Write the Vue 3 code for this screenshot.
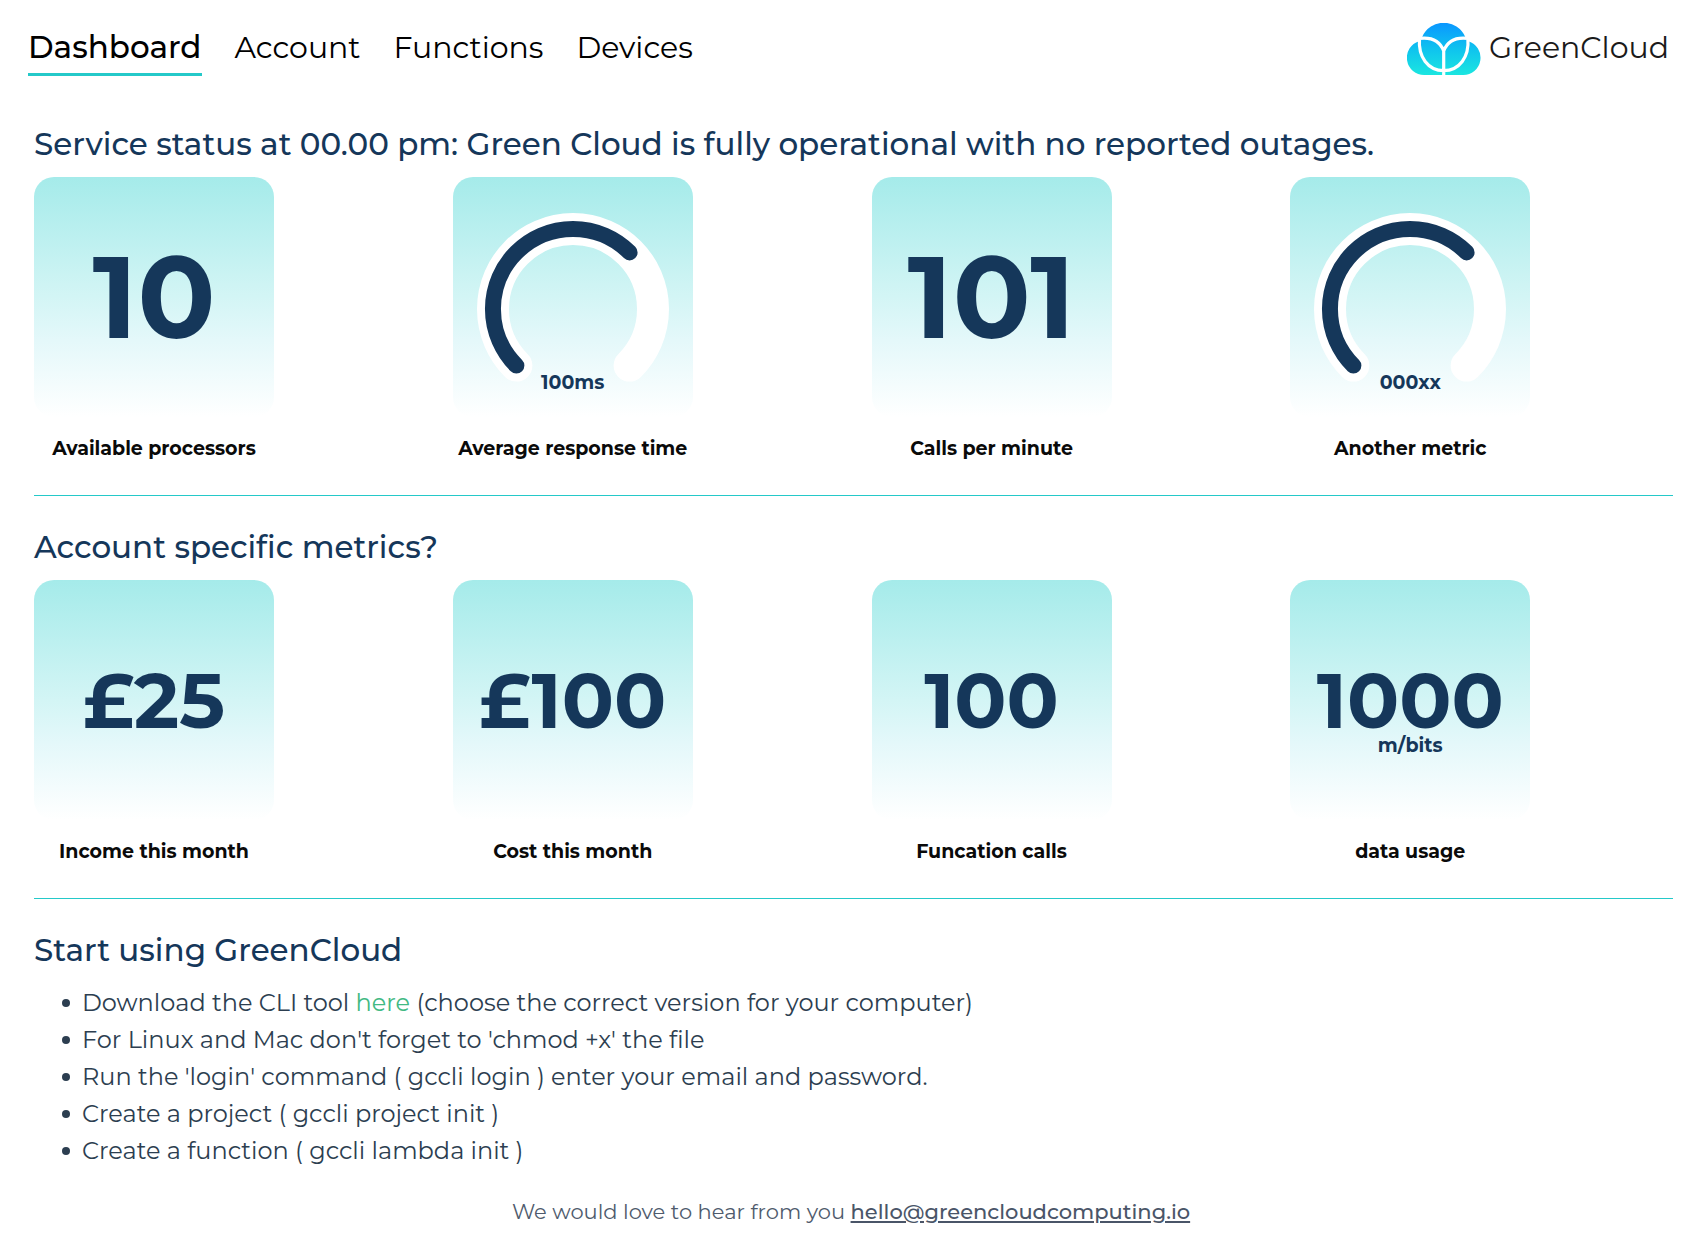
<script setup>
const links = ['Dashboard', 'Account', 'Functions', 'Devices']

const sections = [
  {
    title: 'Service status at 00.00 pm: Green Cloud is fully operational with no reported outages.',
    size: 'large',
    metrics: [
      { value: '10', label: 'Available processors' },
      { gauge: true, unit: '100ms', label: 'Average response time' },
      { value: '101', label: 'Calls per minute' },
      { gauge: true, unit: '000xx', label: 'Another metric' },
    ],
  },
  {
    title: 'Account specific metrics?',
    size: 'medium',
    metrics: [
      { value: '£25', label: 'Income this month' },
      { value: '£100', label: 'Cost this month' },
      { value: '100', label: 'Funcation calls' },
      { value: '1000', unit: 'm/bits', label: 'data usage' },
    ],
  },
]
</script>

<template>
  <div class="page">
    <header class="topbar">
      <nav class="nav">
        <a v-for="(link, i) in links" :key="link" href="#" :class="{ active: i === 0 }">{{ link }}</a>
      </nav>
      <a class="brand" href="#">
        <svg width="74" height="52" viewBox="0 0 74 52" aria-hidden="true">
          <defs>
            <linearGradient id="sky" x1="0" y1="0" x2="0" y2="52" gradientUnits="userSpaceOnUse">
              <stop offset="0" stop-color="#0a97ff" />
              <stop offset="0.5" stop-color="#0fc3ee" />
              <stop offset="1" stop-color="#1be6e0" />
            </linearGradient>
          </defs>
          <path fill="url(#sky)" d="M17.300 52A17.300 17.300 0 0 1 12 18.200L15.300 13.700A23.400 23.400 0 0 1 58.100 13.700L61.400 18.200A17.300 17.300 0 0 1 56.100 52Z" />
          <path fill="none" stroke="#fff" stroke-width="3.200" d="M9 16.300L12.500 15.400C24 14 33 18 36.700 28C40.400 18 49.400 14 60.900 15.400L64.400 16.300M12.500 15.400C11 34 21 47.600 36.700 47.600C52.400 47.600 62.400 34 60.900 15.400M36.700 27V52" />
        </svg>
        <span>GreenCloud</span>
      </a>
    </header>

    <main>
      <section v-for="section in sections" :key="section.title" class="metrics">
        <h2>{{ section.title }}</h2>
        <div class="grid">
          <figure v-for="metric in section.metrics" :key="metric.label">
            <div class="card" :class="section.size">
              <svg v-if="metric.gauge" class="gauge" viewBox="0 0 192 160" aria-hidden="true">
                <path class="track" d="M39.400 152.600A80 80 0 1 1 152.600 152.600" />
                <path class="fill" d="M39.400 152.600A80 80 0 0 1 152.600 39.400" />
              </svg>
              <strong v-else>{{ metric.value }}</strong>
              <span v-if="metric.unit" class="unit">{{ metric.unit }}</span>
            </div>
            <figcaption>{{ metric.label }}</figcaption>
          </figure>
        </div>
      </section>

      <section class="start">
        <h2>Start using GreenCloud</h2>
        <ul>
          <li>Download the CLI tool <a href="#">here</a> (choose the correct version for your computer)</li>
          <li>For Linux and Mac don't forget to 'chmod +x' the file</li>
          <li>Run the 'login' command ( gccli login ) enter your email and password.</li>
          <li>Create a project ( gccli project init )</li>
          <li>Create a function ( gccli lambda init )</li>
        </ul>
      </section>
    </main>

    <footer>
      We would love to hear from you
      <a href="mailto:hello@greencloudcomputing.io">hello@greencloudcomputing.io</a>
    </footer>
  </div>
</template>

<style>
body {
  margin: 0;
  background: #fff;
}
</style>

<style scoped>
.page {
  font-family: Montserrat, Inter, sans-serif;
  color: #2c3e50;
}
.topbar {
  display: flex;
  justify-content: space-between;
  align-items: flex-start;
  padding: 22px 24px 0 28px;
}
.nav {
  display: flex;
  gap: 33px;
}
.nav a {
  border-bottom: 3px solid transparent;
  color: #000;
  font-size: 30px;
  line-height: 51px;
  text-decoration: none;
}
.nav .active {
  border-color: #24c9c9;
  font-size: 31px;
  font-weight: 500;
}
.brand {
  display: flex;
  align-items: flex-start;
  gap: 8px;
  padding-top: 1px;
  color: #1a1a1a;
  font-size: 30px;
  font-weight: 400;
  line-height: 50px;
  text-decoration: none;
}
main {
  padding: 48px 20px 0 34px;
}
h2 {
  margin: 0;
  color: #15375a;
  font-size: 31px;
  font-weight: 500;
  line-height: 40px;
}
.metrics {
  margin-bottom: 31px;
  border-bottom: 1px solid #24c9c9;
}
.grid {
  display: grid;
  grid-template-columns: repeat(4, 1fr);
  gap: 36px;
  padding: 13px 0 34px;
}
figure {
  width: 240px;
  margin: 0;
}
.card {
  display: flex;
  flex-direction: column;
  align-items: center;
  box-sizing: border-box;
  height: 240px;
  border-radius: 20px;
  background: linear-gradient(#a5ebea, #d3f5f5 50%, #e4f8fa 68%, #fff);
  color: #15375a;
}
.card strong {
  font-weight: 700;
}
.large strong {
  padding-top: 60px;
  font-size: 115px;
  line-height: 120px;
}
.medium strong {
  padding-top: 84px;
  font-size: 77px;
  line-height: 72px;
}
.gauge {
  width: 192px;
  height: 160px;
  margin-top: 36px;
  overflow: visible;
}
.gauge path {
  fill: none;
  stroke-linecap: round;
}
.gauge .track {
  stroke: #fff;
  stroke-width: 32;
}
.gauge .fill {
  stroke: #15375a;
  stroke-width: 16;
}
.unit {
  font-size: 19px;
  font-weight: 700;
  line-height: 20px;
}
figcaption {
  padding-top: 20px;
  color: #0a0a0a;
  font-size: 19px;
  font-weight: 700;
  line-height: 24px;
  text-align: center;
  white-space: nowrap;
}
ul {
  margin: 14px 0 0;
  padding-left: 48px;
  font-size: 24px;
  line-height: 37px;
  list-style: none;
}
li::before {
  content: "";
  display: inline-block;
  width: 8px;
  height: 8px;
  margin: 0 12px 0 -20px;
  border-radius: 50%;
  background: #2c3e50;
  vertical-align: 4px;
}
ul a {
  color: #42b983;
  text-decoration: none;
}
footer {
  padding: 27px 0 16px 9px;
  color: #4f5b6d;
  font-size: 21px;
  line-height: 32px;
  text-align: center;
}
footer a {
  color: #4a5568;
  font-weight: 500;
  text-underline-offset: 2px;
}
</style>
